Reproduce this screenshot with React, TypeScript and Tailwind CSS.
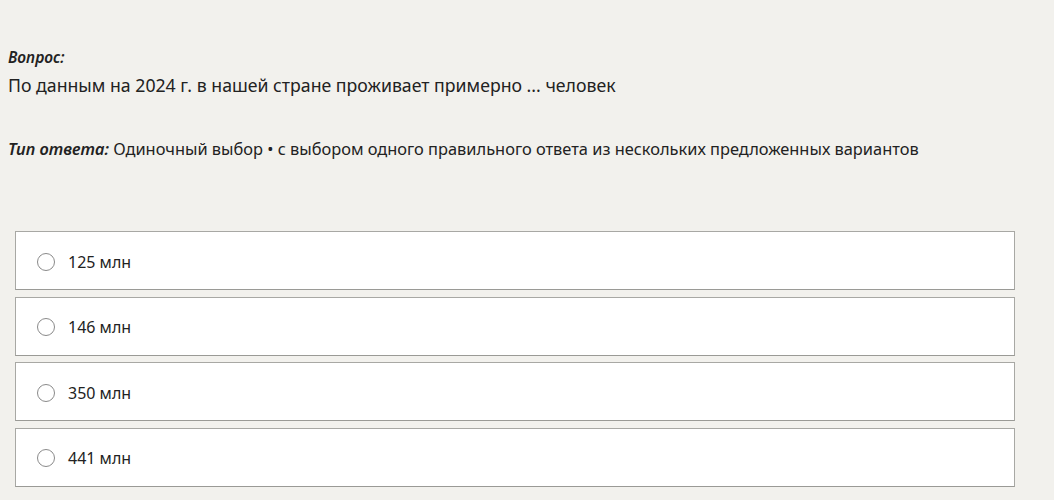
import React from 'react';

const options = ['125 млн', '146 млн', '350 млн', '441 млн'];

export default function App() {
  return (
    <div
      className="min-h-[500px] w-full bg-[#f2f1ed] text-[#222]"
      style={{ fontFamily: '"Noto Sans", "Open Sans", sans-serif' }}
    >
      <div className="px-2 pt-[46px]">
        <div className="text-[15.5px] font-semibold italic leading-[22px]">Вопрос:</div>
        <div className="mt-[5px] text-[17.7px] leading-[24px]">
          По данным на 2024 г. в нашей стране проживает примерно ... человек
        </div>
        <div className="mt-[41px] text-[16.4px] leading-[22px]">
          <span className="font-semibold italic">Тип ответа:</span> Одиночный выбор • с выбором одного
          правильного ответа из нескольких предложенных вариантов
        </div>
      </div>

      <div className="mt-[71px] ml-[15px] flex w-[1000px] flex-col gap-[6.5px]">
        {options.map((o) => (
          <label
            key={o}
            className="flex h-[59px] items-center border border-[#a8a8a4] border-b-[#9a9a96] bg-white pl-[21px] pt-[2px]"
          >
            <span className="h-[18px] w-[18px] rounded-full border border-[#8a8a8a] bg-white" />
            <span className="ml-[13px] text-[16px]">{o}</span>
          </label>
        ))}
      </div>
    </div>
  );
}
